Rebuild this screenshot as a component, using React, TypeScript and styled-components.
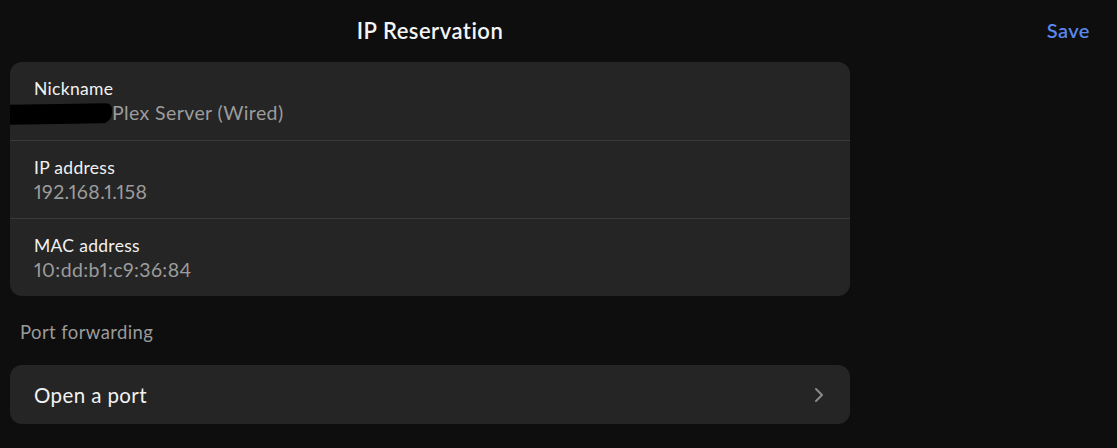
import styled, { createGlobalStyle } from "styled-components";

const GlobalStyle = createGlobalStyle`
	html, body {
		margin: 0;
		padding: 0;
		background: #0e0e0e;
	}
	body {
		font-family: Lato, "Noto Sans", sans-serif;
		font-variant-numeric: proportional-nums;
		-webkit-font-smoothing: antialiased;
	}
`;

const Page = styled.div`
	width: 1117px;
	height: 448px;
	overflow: hidden;
	background: #0e0e0e;
	color: #f2f2f2;
`;

const Header = styled.div`
	display: flex;
	align-items: center;
	height: 62px;
	padding: 0 27px 0 10px;
`;

const Title = styled.div`
	width: 840px;
	text-align: center;
	font-size: 22px;
	font-weight: 600;
	letter-spacing: 0.5px;
	color: #f4f4f4;
	margin-top: -2px;
`;

const SaveButton = styled.button`
	margin-left: auto;
	background: none;
	border: none;
	padding: 0;
	font-family: inherit;
	font-size: 20px;
	font-weight: 600;
	letter-spacing: 0.5px;
	color: #5a87ea;
	cursor: pointer;
	margin-top: -2px;
`;

const Column = styled.div`
	width: 840px;
	margin-left: 10px;
`;

const Card = styled.div`
	background: #252525;
	border-radius: 12px;
	overflow: hidden;
`;

const FieldRow = styled.div`
	display: flex;
	flex-direction: column;
	justify-content: center;
	gap: 2px;
	height: 78px;
	padding: 0 24px;
	box-sizing: border-box;

	& + & {
		border-top: 1px solid #393939;
	}
`;

const FieldLabel = styled.div`
	font-size: 17.5px;
	letter-spacing: 0.3px;
	color: #f2f2f2;
`;

const FieldValue = styled.div`
	font-size: 19.5px;
	letter-spacing: 0.4px;
	color: #9c9c9c;
	white-space: nowrap;
`;

const Redaction = styled.span`
	display: inline-block;
	width: 112px;
	height: 20px;
	margin-left: -34px;
	vertical-align: -4px;
	background: #000;
	border-radius: 2px 6px 10px 3px;
	transform: rotate(-1deg);
`;

const SectionLabel = styled.div`
	display: flex;
	align-items: center;
	height: 69px;
	padding-left: 10px;
	font-size: 18.5px;
	letter-spacing: 0.4px;
	color: #9a9a9a;
	padding-top: 2px;
	box-sizing: border-box;
`;

const LinkRow = styled.div`
	display: flex;
	align-items: center;
	justify-content: space-between;
	height: 59px;
	padding: 0 26px 0 24px;
	background: #252525;
	border-radius: 12px;
	font-size: 20.5px;
	letter-spacing: 0.4px;
	color: #f2f2f2;
`;

const Chevron = () => (
	<svg width="10" height="16" viewBox="0 0 10 16" fill="none">
		<path
			d="M2 2l6 6-6 6"
			stroke="#8a8a8a"
			strokeWidth="2"
			strokeLinecap="round"
			strokeLinejoin="round"
		/>
	</svg>
);

const fields = [
	{ label: "Nickname", value: "Plex Server (Wired)", redacted: true },
	{ label: "IP address", value: "192.168.1.158" },
	{ label: "MAC address", value: "10:dd:b1:c9:36:84" },
];

export default function App() {
	return (
		<Page>
			<GlobalStyle />
			<Header>
				<Title>IP Reservation</Title>
				<SaveButton>Save</SaveButton>
			</Header>
			<Column>
				<Card>
					{fields.map((f) => (
						<FieldRow key={f.label}>
							<FieldLabel>{f.label}</FieldLabel>
							<FieldValue>
								{f.redacted && <Redaction />}
								{f.value}
							</FieldValue>
						</FieldRow>
					))}
				</Card>
				<SectionLabel>Port forwarding</SectionLabel>
				<LinkRow>
					<span>Open a port</span>
					<Chevron />
				</LinkRow>
			</Column>
		</Page>
	);
}
